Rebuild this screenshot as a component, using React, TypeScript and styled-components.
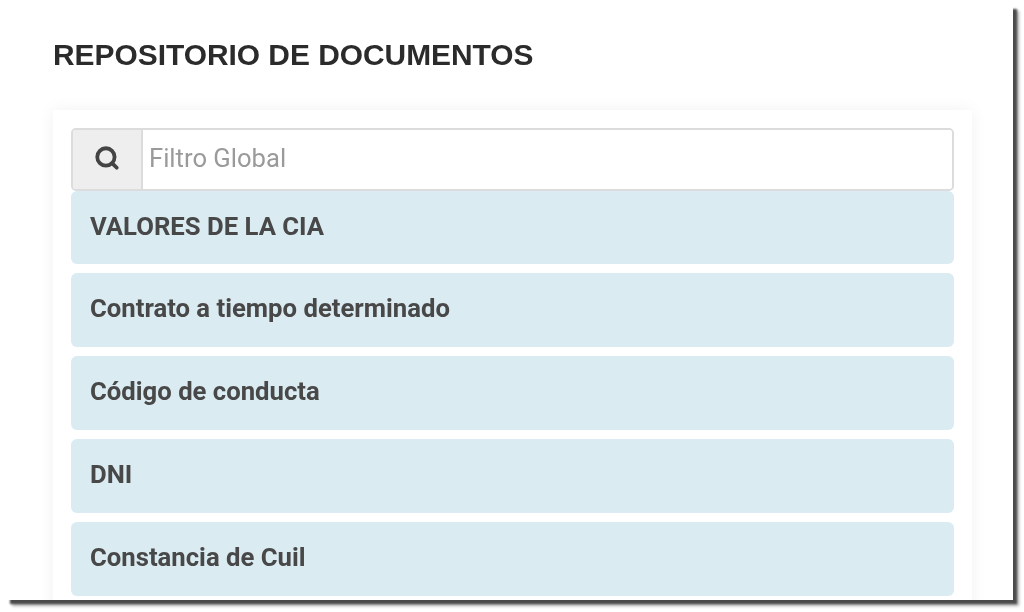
import { Search } from "lucide-react";
import styled, { createGlobalStyle } from "styled-components";

const DOCUMENTS = [
  "VALORES DE LA CIA",
  "Contrato a tiempo determinado",
  "Código de conducta",
  "DNI",
  "Constancia de Cuil",
];

const GlobalStyle = createGlobalStyle`
  html, body {
    margin: 0;
    height: 100%;
    background: #fff;
    overflow: hidden;
  }
  * {
    box-sizing: border-box;
  }
`;

const Stage = styled.div`
  width: 1024px;
  height: 612px;
  padding: 5px 0 0 6px;
`;

const Window = styled.main`
  width: 1007px;
  height: 595px;
  background: #fff;
  box-shadow: 4px 4px 2px #4a4a4a, 6px 6px 3px #b0b0b0;
  overflow: hidden;
  padding: 32px 0 0 47px;
  filter: blur(0.45px);
`;

const Title = styled.h1`
  margin: 0 0 37px;
  height: 36px;
  font: 700 29.9px/36px "Liberation Sans", Arial, sans-serif;
  white-space: nowrap;
  color: #2b2b2b;
`;

const Card = styled.section`
  width: 919px;
  height: 520px;
  background: #fff;
  box-shadow: 0 0 16px rgba(0, 0, 0, 0.06);
  padding: 18px;
  display: flex;
  flex-direction: column;
`;

const SearchGroup = styled.div`
  display: flex;
  height: 63px;
  border: 2px solid #dcdcdc;
  border-radius: 5px;
  overflow: hidden;
`;

const SearchAddon = styled.div`
  width: 70px;
  padding-bottom: 3px;
  display: flex;
  align-items: center;
  justify-content: center;
  background: #eeeeee;
  border-right: 2px solid #dcdcdc;
  color: #444;
`;

const SearchInput = styled.input`
  flex: 1;
  border: 0;
  outline: 0;
  padding: 0 6px 3px;
  background: #fff;
  font: 400 25.6px "Roboto", sans-serif;
  color: #444;

  &::placeholder {
    color: #9a9a9a;
    opacity: 1;
  }
`;

const DocumentList = styled.div`
  display: flex;
  flex-direction: column;
  gap: 9px;
`;

const DocumentRow = styled.div`
  height: 74px;
  padding: 0 19px 4px;
  display: flex;
  align-items: center;
  background: #daebf2;
  border-radius: 6px;
  font: 700 25.7px "Roboto", sans-serif;
  color: #484848;

  &:first-child {
    height: 73px;
  }
`;

export default function App() {
  return (
    <Stage>
      <GlobalStyle />
      <Window>
        <Title>REPOSITORIO DE DOCUMENTOS</Title>
        <Card>
          <SearchGroup>
            <SearchAddon>
              <Search size={26} strokeWidth={3.5} />
            </SearchAddon>
            <SearchInput placeholder="Filtro Global" />
          </SearchGroup>
          <DocumentList>
            {DOCUMENTS.map((name) => (
              <DocumentRow key={name}>{name}</DocumentRow>
            ))}
          </DocumentList>
        </Card>
      </Window>
    </Stage>
  );
}
